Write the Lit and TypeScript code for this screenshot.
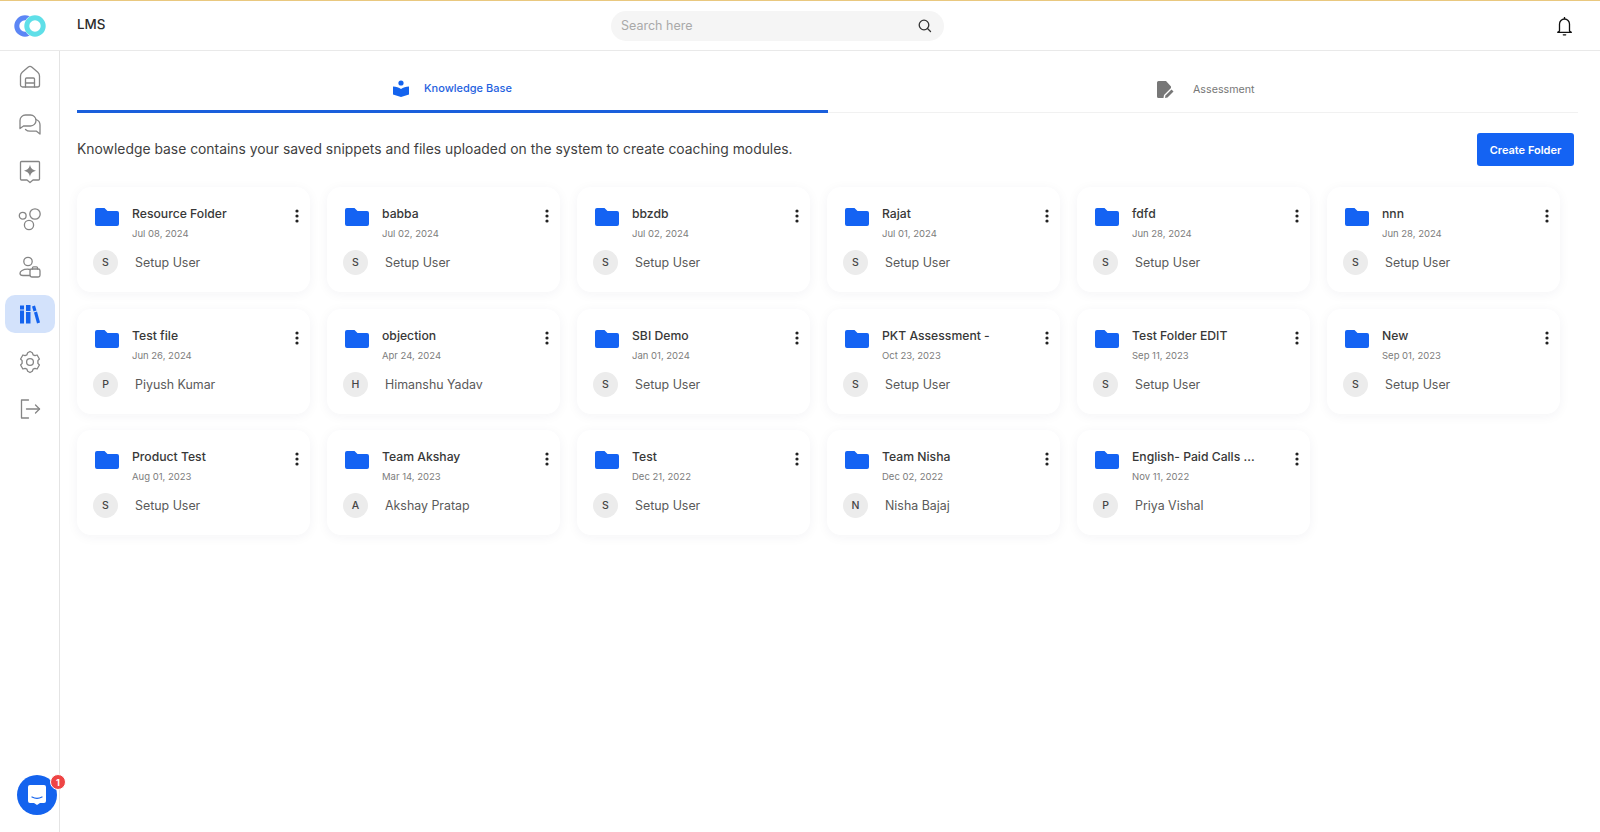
import { LitElement, html, css, svg } from 'lit';
import { customElement } from 'lit/decorators.js';

interface Folder {
  name: string;
  date: string;
  owner: string;
}

const FOLDERS: Folder[] = [
  { name: 'Resource Folder', date: 'Jul 08, 2024', owner: 'Setup User' },
  { name: 'babba', date: 'Jul 02, 2024', owner: 'Setup User' },
  { name: 'bbzdb', date: 'Jul 02, 2024', owner: 'Setup User' },
  { name: 'Rajat', date: 'Jul 01, 2024', owner: 'Setup User' },
  { name: 'fdfd', date: 'Jun 28, 2024', owner: 'Setup User' },
  { name: 'nnn', date: 'Jun 28, 2024', owner: 'Setup User' },
  { name: 'Test file', date: 'Jun 26, 2024', owner: 'Piyush Kumar' },
  { name: 'objection', date: 'Apr 24, 2024', owner: 'Himanshu Yadav' },
  { name: 'SBI Demo', date: 'Jan 01, 2024', owner: 'Setup User' },
  { name: 'PKT Assessment -', date: 'Oct 23, 2023', owner: 'Setup User' },
  { name: 'Test Folder EDIT', date: 'Sep 11, 2023', owner: 'Setup User' },
  { name: 'New', date: 'Sep 01, 2023', owner: 'Setup User' },
  { name: 'Product Test', date: 'Aug 01, 2023', owner: 'Setup User' },
  { name: 'Team Akshay', date: 'Mar 14, 2023', owner: 'Akshay Pratap' },
  { name: 'Test', date: 'Dec 21, 2022', owner: 'Setup User' },
  { name: 'Team Nisha', date: 'Dec 02, 2022', owner: 'Nisha Bajaj' },
  { name: 'English- Paid Calls ...', date: 'Nov 11, 2022', owner: 'Priya Vishal' },
];

const NAV_ICONS = [
  svg`<path d="M2.500 20V11c0-1.500.6-2.800 1.700-3.800L10 2.200a3 3 0 0 1 4 0l5.800 5c1.100 1 1.700 2.300 1.700 3.800v9a2 2 0 0 1-2 2h-15a2 2 0 0 1-2-2z"/><path d="M7.500 22v-8a1 1 0 0 1 1-1h7a1 1 0 0 1 1 1v8"/><path d="M7.500 18h9"/>`,
  svg`<path d="M2 16.500V8.500A5.500 5.500 0 0 1 7.500 3h5A5.500 5.500 0 0 1 18 8.500 5.500 5.500 0 0 1 12.500 14H5.500z"/><path d="M18 7.500c2.300.8 4 2.900 4 5.500v9l-3.500-2.800H12c-1.800 0-3.300-.6-4.500-1.700"/>`,
  svg`<path d="M3.500 1.500h17a1 1 0 0 1 1 1V19a1 1 0 0 1-1 1H15l-3 2.500L9 20H3.500a1 1 0 0 1-1-1V2.500a1 1 0 0 1 1-1z"/><path fill="currentColor" stroke="none" d="M12 4.500c.6 3.500 2 5 6 6.200-4 1.200-5.400 2.700-6 6.300-.6-3.600-2-5.100-6-6.300 4-1.200 5.400-2.700 6-6.200z"/>`,
  svg`<circle cx="4.700" cy="8.700" r="3.400"/><circle cx="17" cy="7" r="5.200"/><circle cx="11" cy="18" r="4.600"/>`,
  svg`<circle cx="10" cy="6.500" r="4.200"/><path d="M12 14.500c-.8-.2-1.400-.3-2.500-.3-4.500 0-7.500 2-7.500 4 0 1.500 1.300 2.300 3 2.300h7"/><rect x="12" y="14" width="10" height="8" rx="1.800"/><path d="M14.500 14v-1.200a1 1 0 0 1 1-1h3a1 1 0 0 1 1 1V14"/>`,
  svg``,
  svg`<circle cx="12" cy="12" r="3.400"/><path d="M12 1.500l2.300 1.300.8 2 1.900.8 2.100-.6 2.300 4-1.500 1.600v2.800l1.500 1.600-2.300 4-2.100-.6-1.900.8-.8 2L12 22.500l-2.300-1.300-.8-2-1.900-.8-2.100.6-2.300-4 1.500-1.600v-2.800L2.600 9l2.300-4 2.100.6 1.900-.8.800-2z"/>`,
  svg`<path d="M10.500 3H3.500v18h7"/><path d="M8.500 12h13"/><path d="M17.500 8l4 4-4 4"/>`,
];

@customElement('app-root')
export class AppRoot extends LitElement {
  static styles = css`
    :host {
      display: block;
      position: relative;
      height: 832px;
      overflow: hidden;
      background: #fff;
      font-family: Inter, 'Liberation Sans', sans-serif;
      color: #2b2b2b;
    }
    .topline {
      height: 1px;
      background: #e9c87f;
    }
    .header {
      display: flex;
      align-items: center;
      height: 50px;
      border-bottom: 1px solid #e9e9e9;
      box-sizing: border-box;
    }
    .logo {
      width: 60px;
      display: flex;
      justify-content: center;
    }
    .app-name {
      margin-left: 17px;
      margin-top: -3px;
      font-size: 13.400px;
      font-weight: 500;
      width: 534px;
    }
    .search {
      width: 333px;
      height: 30px;
      box-sizing: border-box;
      border-radius: 15px;
      background: #f5f5f5;
      display: flex;
      align-items: center;
      justify-content: space-between;
      padding: 0 12px 0 10px;
      font-size: 12.500px;
      color: #a9a9a9;
    }
    .bell {
      margin-left: auto;
      margin-right: 28px;
      display: flex;
    }
    .body {
      display: flex;
      height: 781px;
    }
    .sidebar {
      width: 60px;
      box-sizing: border-box;
      border-right: 1px solid #e4e4e4;
      display: flex;
      flex-direction: column;
      align-items: center;
      padding: 6.500px 5px 0 5px;
      flex: none;
    }
    .nav {
      width: 50px;
      height: 38px;
      margin-bottom: 9.500px;
      border-radius: 10px;
      display: flex;
      align-items: center;
      justify-content: center;
      color: #858585;
    }
    .nav.active {
      background: #d3e2fb;
      color: #1463ee;
    }
    .main {
      flex: 1;
      padding: 0 22px 0 17px;
      min-width: 0;
    }
    .tabs {
      display: flex;
      height: 62px;
      width: 1501px;
      border-bottom: 1px solid #f1f1f1;
      box-sizing: border-box;
    }
    .tab {
      display: flex;
      align-items: center;
      font-size: 11px;
      font-weight: 500;
      color: #777;
      box-sizing: border-box;
      padding-top: 15px;
    }
    .tab.kb {
      width: 751px;
      padding-left: 316px;
      gap: 15px;
      color: #1f62e0;
      border-bottom: 3px solid #1a5fdc;
      height: 62px;
    }
    .tab.as {
      padding-left: 329px;
      gap: 19px;
      font-size: 10.700px;
      font-weight: 400;
    }
    .intro {
      display: flex;
      justify-content: space-between;
      align-items: center;
      width: 1497px;
      margin-top: 20px;
    }
    .intro p {
      margin: 0 0 2px;
      font-size: 13.880px;
      color: #3f3f3f;
    }
    .create {
      width: 97px;
      height: 33px;
      background: #1463f3;
      color: #fff;
      border-radius: 3px;
      display: flex;
      align-items: center;
      justify-content: center;
      font-size: 11px;
      font-weight: 600;
    }
    .grid {
      display: grid;
      grid-template-columns: repeat(6, 233px);
      column-gap: 17px;
      row-gap: 16.500px;
      margin-top: 21px;
    }
    .card {
      height: 105px;
      box-sizing: border-box;
      border-radius: 14px;
      background: #fff;
      box-shadow: 0 2px 12px rgba(30, 40, 70, 0.05);
      padding: 17px 11px 0 18px;
    }
    .top {
      display: flex;
      align-items: flex-start;
    }
    .folder {
      margin-top: 4px;
      flex: none;
    }
    .meta {
      margin-left: 13px;
      flex: 1;
      min-width: 0;
    }
    .name {
      font-size: 12.200px;
      font-weight: 500;
      line-height: 20px;
      color: #383838;
      white-space: nowrap;
    }
    .date {
      font-size: 9.500px;
      color: #7c7c7c;
      line-height: 14px;
      margin-top: 3px;
    }
    .kebab {
      flex: none;
      margin-top: 5px;
    }
    .owner {
      display: flex;
      align-items: center;
      margin-top: 9px;
      margin-left: -1px;
      font-size: 12.400px;
      color: #5a5a5a;
    }
    .avatar {
      width: 25px;
      height: 25px;
      border-radius: 50%;
      background: #ececec;
      display: flex;
      align-items: center;
      justify-content: center;
      font-size: 10.500px;
      font-weight: 500;
      margin-right: 17px;
      margin-left: -1px;
      color: #444;
    }
    .chat {
      position: absolute;
      left: 17px;
      top: 775px;
      width: 40px;
      height: 40px;
      border-radius: 50%;
      background: #1463ee;
      display: flex;
      align-items: center;
      justify-content: center;
    }
    .badge {
      position: absolute;
      left: 33px;
      top: -1px;
      width: 14px;
      height: 14px;
      border-radius: 50%;
      background: #ee4444;
      border: 1px solid #fff;
      color: #fff;
      font-size: 9px;
      font-weight: 700;
      display: flex;
      align-items: center;
      justify-content: center;
    }
  `;

  private navIcon(i: number) {
    if (i === 5) {
      // library icon is filled, the others are outlined
      return html`<svg width="21" height="21" viewBox="0 0 21 21" fill="#1463ee">
        <rect x="1" y="1.500" width="4" height="4"/><rect x="1" y="6.500" width="4" height="13"/>
        <rect x="7" y="1" width="4.500" height="6"/><rect x="7" y="8" width="4.500" height="11.500"/>
        <path d="M13 2.500l3-1 1.500 5-3 1zM15 8.500l3-1 3 11-3 1z"/>
      </svg>`;
    }
    return html`<svg width="24" height="24" viewBox="0 0 24 24" fill="none" stroke="currentColor"
      stroke-width="1.300" stroke-linecap="round" stroke-linejoin="round">${NAV_ICONS[i]}</svg>`;
  }

  private renderCard(f: Folder) {
    return html`<div class="card">
      <div class="top">
        <svg class="folder" width="24" height="18" viewBox="0 0 24 18">
          <path fill="#1463f3" d="M2 0h7.500l3 3H22a2 2 0 0 1 2 2v11a2 2 0 0 1-2 2H2a2 2 0 0 1-2-2V2a2 2 0 0 1 2-2z"/>
        </svg>
        <div class="meta">
          <div class="name">${f.name}</div>
          <div class="date">${f.date}</div>
        </div>
        <svg class="kebab" width="4" height="14" viewBox="0 0 4 14" fill="#222">
          <circle cx="2" cy="2" r="1.600"/><circle cx="2" cy="7" r="1.600"/><circle cx="2" cy="12" r="1.600"/>
        </svg>
      </div>
      <div class="owner"><span class="avatar">${f.owner[0]}</span>${f.owner}</div>
    </div>`;
  }

  render() {
    return html`
      <div class="topline"></div>
      <div class="header">
        <div class="logo">
          <svg width="32" height="22" viewBox="0 0 32 22" fill="none" stroke-width="5">
            <circle cx="11" cy="11" r="8.200" stroke="#5c86f5"/>
            <circle cx="21" cy="11" r="11" fill="#fff" stroke="none"/>
            <circle cx="21" cy="11" r="8.200" stroke="#5fdfe8"/>
          </svg>
        </div>
        <div class="app-name">LMS</div>
        <div class="search">
          Search here
          <svg width="15" height="15" viewBox="0 0 15 15" fill="none" stroke="#333" stroke-width="1.300" stroke-linecap="round">
            <circle cx="7" cy="7" r="4.800"/><path d="M10.500 10.500l3 3"/>
          </svg>
        </div>
        <div class="bell">
          <svg width="15" height="20" viewBox="0 0 15 20" fill="none" stroke="#111" stroke-width="1.300" stroke-linejoin="round">
            <path d="M2.500 15V8a5 5 0 0 1 10 0v7l1.800 1.300H.700z"/>
            <path d="M7.500 1v2"/><path d="M6.300 18.800h2.400" stroke-linecap="round"/>
          </svg>
        </div>
      </div>
      <div class="body">
        <div class="sidebar">
          ${NAV_ICONS.map((_, i) => html`<div class="nav ${i === 5 ? 'active' : ''}">${this.navIcon(i)}</div>`)}
        </div>
        <div class="main">
          <div class="tabs">
            <div class="tab kb">
              <svg width="16" height="17" viewBox="0 0 16 17" fill="#1463ee">
                <circle cx="8" cy="3" r="2.600"/>
                <path d="M0 6.500c3 0 6 1 8 2.500 2-1.500 5-2.500 8-2.500v8L8 17l-8-2.500z"/>
              </svg>
              Knowledge Base
            </div>
            <div class="tab as">
              <svg width="17" height="17" viewBox="0 0 17 17" fill="#777">
                <path d="M1.500 0H9l5 5.500V7L7 14l-.5 3H1.500A1.500 1.500 0 0 1 0 15.500v-14A1.500 1.500 0 0 1 1.500 0z"/>
                <path d="M8.500 14.500l6-6 2 2-6 6-2.500.5z"/>
              </svg>
              Assessment
            </div>
          </div>
          <div class="intro">
            <p>Knowledge base contains your saved snippets and files uploaded on the system to create coaching modules.</p>
            <div class="create">Create Folder</div>
          </div>
          <div class="grid">${FOLDERS.map((f) => this.renderCard(f))}</div>
        </div>
      </div>
      <div class="chat">
        <svg width="20" height="22" viewBox="0 0 20 22">
          <path fill="#fff" d="M3 1h14a2 2 0 0 1 2 2v14a2 2 0 0 1-2 2h-4l-3 2-3-2H3a2 2 0 0 1-2-2V3a2 2 0 0 1 2-2z"/>
          <path d="M5 13c3 1.600 7 1.600 10 0" fill="none" stroke="#1463ee" stroke-width="1.200" stroke-linecap="round"/>
        </svg>
        <span class="badge">1</span>
      </div>
    `;
  }
}
